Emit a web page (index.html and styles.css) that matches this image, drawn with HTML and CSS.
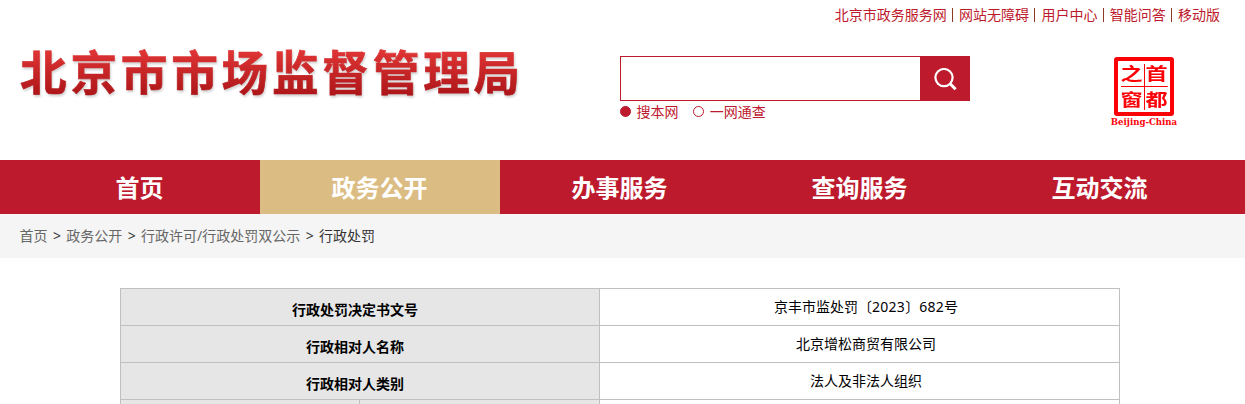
FILE: index.html
```html
<!DOCTYPE html>
<html lang="zh-CN">
<head>
<meta charset="utf-8">
<title>行政处罚</title>
<link rel="stylesheet" href="styles.css">
</head>
<body>
<div class="page">
<header class="header">
  <div class="toplinks"><a>北京市政务服务网</a><i></i><a>网站无障碍</a><i></i><a>用户中心</a><i></i><a>智能问答</a><i></i><a>移动版</a></div>
  <div class="masthead">
    <h1 class="logo">北京市市场监督管理局</h1>
    <div class="search">
      <div class="search-box">
        <div class="search-input"></div>
        <div class="search-btn">
          <svg width="24" height="24" viewBox="0 0 24 24" fill="none" stroke="#fff" stroke-width="2.2"><circle cx="10" cy="9.6" r="8.6"/><path d="M16 15.6l5.6 5.6" stroke-width="3"/></svg>
        </div>
      </div>
      <div class="options">
        <span class="radio checked"></span><span class="option">搜本网</span>
        <span class="radio"></span><span class="option">一网通查</span>
      </div>
    </div>
    <div class="seal">
      <div class="seal-box">
        <span>之</span><span>首</span><span>窗</span><span>都</span>
      </div>
      <div class="seal-caption">Beijing-China</div>
    </div>
  </div>
</header>
<nav class="nav">
  <a>首页</a><a class="active">政务公开</a><a>办事服务</a><a>查询服务</a><a>互动交流</a>
</nav>
<div class="crumbs"><a>首页</a><i>&gt;</i><a>政务公开</a><i>&gt;</i><a>行政许可/行政处罚双公示</a><i>&gt;</i><span>行政处罚</span></div>
<table class="detail">
  <colgroup><col class="c1"><col class="c2"><col class="c3"></colgroup>
  <tr><th colspan="2">行政处罚决定书文号</th><td>京丰市监处罚〔<b>2023</b>〕<b>682</b>号</td></tr>
  <tr><th colspan="2">行政相对人名称</th><td>北京增松商贸有限公司</td></tr>
  <tr><th colspan="2">行政相对人类别</th><td>法人及非法人组织</td></tr>
  <tr><th></th><th></th><td></td></tr>
</table>
</div>
</body>
</html>
```
FILE: styles.css
```css
* { box-sizing: border-box; }
body {
  margin: 0;
  background: #fff;
  color: #000;
  font: 14px/20px "Noto Sans", "Noto Sans CJK SC", sans-serif;
}
.page { height: 404px; overflow: hidden; }
i { font-style: normal; }
.header { height: 160px; padding: 0 25px 0 20px; color: #bd1a2d; }
.toplinks { display: flex; justify-content: flex-end; height: 30px; line-height: 29px; }
.toplinks i { width: 1px; height: 14px; margin: 8px 6px 0 5.3px; background: #8c3a26; }
.masthead { display: flex; height: 130px; }
.logo {
  width: 600px;
  height: 72px;
  margin: 4px 0 0;
  font: 700 46.6px/72px "Noto Sans CJK SC", sans-serif;
  letter-spacing: 3.8px;
  white-space: nowrap;
  color: transparent;
  -webkit-text-stroke: .7px transparent;
  background: linear-gradient(#e23636 20%, #ac1518 86%);
  -webkit-background-clip: text;
  background-clip: text;
  filter: drop-shadow(1px 2px 1px rgba(0, 0, 0, .18));
}
.search { width: 350px; margin-top: 26px; }
.search-box { display: flex; height: 45px; }
.search-input { width: 300px; border: 1px solid #bd1a2d; border-right: 0; }
.search-btn { width: 50px; background: #bd1a2d; padding: 12px 0 0 14px; }
.search-btn svg { display: block; }
.options { display: flex; align-items: center; height: 21px; }
.radio { width: 11px; height: 11px; border: 1px solid #bd1a2d; border-radius: 50%; }
.checked { background: #bd1a2d; }
.option { margin: 0 15px 0 5.4px; }
.seal { width: 80px; margin: 27px 0 0 134px; display: flex; flex-direction: column; align-items: center; color: #fb0207; }
.seal-box {
  width: 60px;
  height: 59px;
  padding: 0 1px;
  border: 4px solid #fb0207;
  border-radius: 3px;
  display: grid;
  grid-template-columns: 1fr 1fr;
  grid-template-rows: 26px 25px;
  background: linear-gradient(#fb0207, #fb0207) 50% 50% / 1px 90% no-repeat, linear-gradient(#fb0207, #fb0207) 50% 50% / 90% 1px no-repeat;
  font: 700 17px/24px "Noto Sans CJK SC", sans-serif;
  text-align: center;
}
.seal-box span { transform: scaleX(1.3); }
.seal-caption { font: 700 8.6px/12px "DejaVu Serif", serif; white-space: nowrap; }
.nav { display: flex; height: 54px; padding-left: 20px; background: #bd1a2d; }
.nav a { width: 240px; padding-right: 1px; text-align: center; color: #fff; font-size: 24px; font-weight: 700; line-height: 55px; }
.nav .active { background: #dbbc83; }
.crumbs { display: flex; height: 44px; padding-left: 19.5px; line-height: 43px; background: #f5f5f5; color: #333; }
.crumbs a { color: #666; }
.crumbs i { width: 18.8px; text-align: center; }
.detail { width: 1000px; margin: 30px 0 0 120px; border-collapse: collapse; table-layout: fixed; }
.detail .c1 { width: 239px; }
.detail .c2 { width: 240px; }
.detail th, .detail td { height: 37px; border: 1px solid #bfc0c2; text-align: center; vertical-align: top; line-height: 20px; }
.detail th { padding: 11px 10px 5px 0; background: #e6e6e6; font-weight: 700; }
.detail td { padding: 8px 0 8px 13px; font-weight: 400; }
.detail b { font-weight: 400; letter-spacing: .3px; }
```
